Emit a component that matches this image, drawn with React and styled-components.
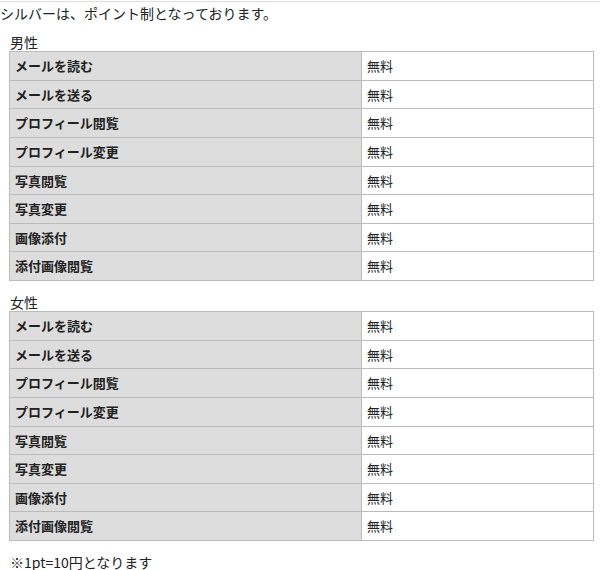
import React from "react"
import styled, { createGlobalStyle } from "styled-components"

const GlobalStyle = createGlobalStyle`
  html, body {
    margin: 0;
    padding: 0;
    background: #fff;
  }
  body {
    font-family: "Noto Sans CJK JP", "Noto Sans", sans-serif;
    color: #222;
  }
`;

const Page = styled.div`
  margin-top: 1px;
  border-top: 1px solid #dedede;
  width: 600px;
`;

const Intro = styled.p`
  margin: 1px 0 0;
  font-size: 14px;
  line-height: 20px;
`;

const Section = styled.section`
  margin-top: ${p => p.$first ? "11px" : "13px"};
`;

const Title = styled.h3`
  margin: 0 0 0 10px;
  font-size: 14px;
  font-weight: normal;
  line-height: 17px;
`;

const Table = styled.table`
  margin-left: 9px;
  width: 585px;
  border-collapse: collapse;
  border: 1px solid #bbb;
  font-size: 13px;
  line-height: 19.625px;
  td {
    border: 1px solid #bbb;
    padding: 4px 5px;
    vertical-align: middle;
  }
`;

const Label = styled.td`
  width: 341px;
  background: #ddd;
  font-weight: bold;
`;

const Value = styled.td`
  background: #fff;
`;

const Note = styled.p`
  margin: 13px 0 0 10px;
  font-size: 14px;
  line-height: 16px;
`;

const items = [
  "メールを読む",
  "メールを送る",
  "プロフィール閲覧",
  "プロフィール変更",
  "写真閲覧",
  "写真変更",
  "画像添付",
  "添付画像閲覧",
];

function PriceTable({ title, first }) {
  return (
    <Section $first={first}>
      <Title>{title}</Title>
      <Table>
        <tbody>
          {items.map(name => (
            <tr key={name}>
              <Label>{name}</Label>
              <Value>無料</Value>
            </tr>
          ))}
        </tbody>
      </Table>
    </Section>
  )
}

export default function App(){
  return (
    <Page>
      <GlobalStyle />
      <Intro>シルバーは、ポイント制となっております。</Intro>
      <PriceTable title="男性" first />
      <PriceTable title="女性" />
      <Note>※1pt=10円となります</Note>
    </Page>
  )
}
